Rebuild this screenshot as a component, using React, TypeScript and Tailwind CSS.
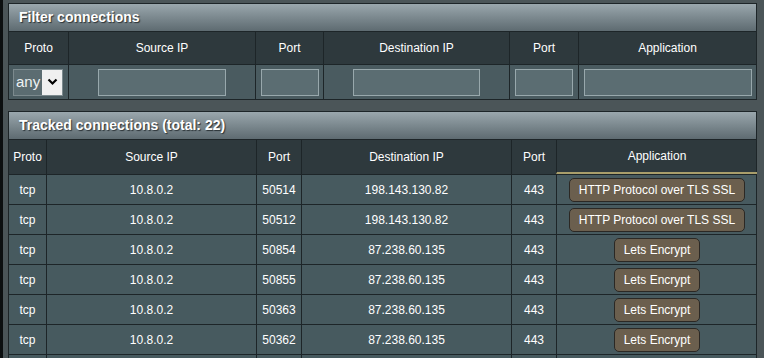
import React from "react";

type Conn = {
  proto: string;
  src: string;
  sport: string;
  dst: string;
  dport: string;
  app: string;
};

const conns: Conn[] = [
  { proto: "tcp", src: "10.8.0.2", sport: "50514", dst: "198.143.130.82", dport: "443", app: "HTTP Protocol over TLS SSL" },
  { proto: "tcp", src: "10.8.0.2", sport: "50512", dst: "198.143.130.82", dport: "443", app: "HTTP Protocol over TLS SSL" },
  { proto: "tcp", src: "10.8.0.2", sport: "50854", dst: "87.238.60.135", dport: "443", app: "Lets Encrypt" },
  { proto: "tcp", src: "10.8.0.2", sport: "50855", dst: "87.238.60.135", dport: "443", app: "Lets Encrypt" },
  { proto: "tcp", src: "10.8.0.2", sport: "50363", dst: "87.238.60.135", dport: "443", app: "Lets Encrypt" },
  { proto: "tcp", src: "10.8.0.2", sport: "50362", dst: "87.238.60.135", dport: "443", app: "Lets Encrypt" },
];

const filterCols = "grid grid-cols-[59px_187px_68px_186px_69px_178px]";
const trackCols = "grid grid-cols-[37px_210px_45px_210px_45px_201px]";

const Title = ({ text }: { text: string }) => (
  <div className="h-[27px] flex items-center pl-[10px] bg-gradient-to-b from-[#9aa7ad] to-[#5e6b71] text-[14px] font-bold text-white [text-shadow:1px_1px_1px_#2a3236]">
    {text}
  </div>
);

const Input = ({ w }: { w: string }) => (
  <div className={`${w} h-[27px] bg-[#5b6d72] border border-[#98a8ac]`} />
);

export default function App() {
  return (
    <div className="w-[764px] h-[358px] overflow-hidden flex bg-[#4b5558] text-white text-[12px] font-['Liberation_Sans',Arial,sans-serif]">
      <div className="w-[3px] shrink-0 bg-[#0c0f10]" />
      <div className="flex-1 flex flex-col pl-[5px] pt-[3px]">
        {/* filter */}
        <div className="w-[749px] border border-[#1d2528]">
          <Title text="Filter connections" />
          <div className={`${filterCols} h-[33px] bg-[#2e393d] border-t border-[#1d2528]`}>
            {["Proto", "Source IP", "Port", "Destination IP", "Port", "Application"].map((h, i) => (
              <div key={i} className={`flex items-center justify-center ${i ? "border-l border-[#1d2528]" : ""}`}>
                {h}
              </div>
            ))}
          </div>
          <div className={`${filterCols} h-[35px] bg-[#4a5b60] border-t border-[#1d2528]`}>
            <div className="flex items-center pl-[4px]">
              <div className="w-[50px] h-[27px] flex border border-[#7c8a8e] bg-[#5b6c71]">
                <span className="flex-1 flex items-center pl-[2px] text-[15px] text-[#eef2f3]">any</span>
                <span className="w-[20px] flex items-center justify-center bg-[#f0f0f0]">
                  <svg width="11" height="8" viewBox="0 0 11 8">
                    <path d="M1.5 1.5 L5.5 5.5 L9.5 1.5" stroke="#000" strokeWidth="2.2" fill="none" />
                  </svg>
                </span>
              </div>
            </div>
            <div className="flex items-center justify-center border-l border-[#1d2528]"><Input w="w-[128px]" /></div>
            <div className="flex items-center justify-center border-l border-[#1d2528]"><Input w="w-[58px]" /></div>
            <div className="flex items-center justify-center border-l border-[#1d2528]"><Input w="w-[127px]" /></div>
            <div className="flex items-center justify-center border-l border-[#1d2528]"><Input w="w-[58px]" /></div>
            <div className="flex items-center justify-center border-l border-[#1d2528]"><Input w="w-[168px]" /></div>
          </div>
        </div>

        {/* tracked */}
        <div className="w-[749px] mt-[11px] border border-[#1d2528] border-b-0">
          <Title text="Tracked connections (total: 22)" />
          <div className={`${trackCols} h-[35px] bg-[#2e393d] border-t border-[#1d2528]`}>
            {["Proto", "Source IP", "Port", "Destination IP", "Port"].map((h, i) => (
              <div key={i} className={`flex items-center justify-center ${i ? "border-l border-[#1d2528]" : ""}`}>
                {h}
              </div>
            ))}
            <div className="flex items-center justify-center border-l border-[#1d2528] border-b-2 border-b-[#a99e6b]">
              Application
            </div>
          </div>
          {conns.map((c, i) => (
            <div key={i} className={`${trackCols} h-[30px] bg-[#475a5f] border-t border-[#1d2528]`}>
              <div className="flex items-center justify-center">{c.proto}</div>
              <div className="flex items-center justify-center border-l border-[#1d2528]">{c.src}</div>
              <div className="flex items-center justify-center border-l border-[#1d2528]">{c.sport}</div>
              <div className="flex items-center justify-center border-l border-[#1d2528]">{c.dst}</div>
              <div className="flex items-center justify-center border-l border-[#1d2528]">{c.dport}</div>
              <div className="flex items-center justify-center border-l border-[#1d2528]">
                <span className="h-[24px] px-[9px] flex items-center rounded-[5px] bg-[#6b5f4e] border border-[#2b2824]">
                  {c.app}
                </span>
              </div>
            </div>
          ))}
          {/* next row, cut off by the window */}
          <div className={`${trackCols} h-[30px] bg-[#475a5f] border-t border-[#1d2528]`}>
            <div />
            <div className="border-l border-[#1d2528]" />
            <div className="border-l border-[#1d2528]" />
            <div className="border-l border-[#1d2528]" />
            <div className="border-l border-[#1d2528]" />
            <div className="border-l border-[#1d2528]" />
          </div>
        </div>
      </div>
    </div>
  );
}
